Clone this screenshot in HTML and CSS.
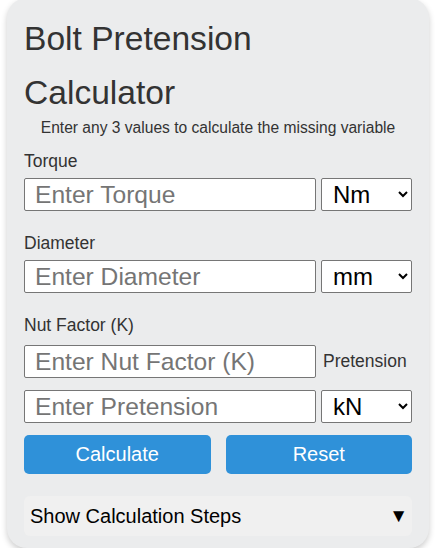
FILE: index.html
```html
<!DOCTYPE html>
<html lang="en">
<head>
    <meta charset="UTF-8">
    <meta name="viewport" content="width=device-width, initial-scale=1.0">
    <title>Bolt Pretension Calculator</title>
    <link rel="stylesheet" href="styles.css">
</head>
<body>
    <div class="calculator">
        <h1 class="title">Bolt Pretension Calculator</h1>
        <p class="subtitle">Enter any 3 values to calculate the missing variable</p>

        <div class="field">
            <label for="torque">Torque</label>
            <div class="row">
                <input type="number" id="torque" placeholder="Enter Torque">
                <select id="torqueUnit">
                    <option>Nm</option>
                    <option>lbf·ft</option>
                </select>
            </div>
        </div>

        <div class="field">
            <label for="diameter">Diameter</label>
            <div class="row">
                <input type="number" id="diameter" placeholder="Enter Diameter">
                <select id="diameterUnit">
                    <option>mm</option>
                    <option>in</option>
                </select>
            </div>
        </div>

        <div class="field">
            <label for="nutFactor" class="label-wide">Nut Factor (K)</label>
            <div class="row">
                <input type="number" id="nutFactor" placeholder="Enter Nut Factor (K)">
                <span class="inline-label">Pretension</span>
            </div>
            <div class="row row-next">
                <input type="number" id="pretension" placeholder="Enter Pretension">
                <select id="pretensionUnit">
                    <option>kN</option>
                    <option>lbf</option>
                </select>
            </div>
        </div>

        <div class="btn-group">
            <button class="btn" onclick="calculate()">Calculate</button>
            <button class="btn" onclick="resetForm()">Reset</button>
        </div>

        <details class="steps">
            <summary>Show Calculation Steps <span class="arrow">▼</span></summary>
            <div id="stepsText"></div>
        </details>
    </div>

    <script>
        // T = K * D * F
        function calculate() {
            const T = parseFloat(document.getElementById('torque').value);
            const D = parseFloat(document.getElementById('diameter').value) / 1000;
            const K = parseFloat(document.getElementById('nutFactor').value);
            const F = parseFloat(document.getElementById('pretension').value) * 1000;
            const steps = document.getElementById('stepsText');

            if (isNaN(F) && !isNaN(T) && !isNaN(D) && !isNaN(K)) {
                document.getElementById('pretension').value = (T / (K * D) / 1000).toFixed(2);
                steps.textContent = 'F = T / (K × D)';
            } else if (isNaN(T) && !isNaN(D) && !isNaN(K) && !isNaN(F)) {
                document.getElementById('torque').value = (K * D * F).toFixed(2);
                steps.textContent = 'T = K × D × F';
            } else if (isNaN(K) && !isNaN(T) && !isNaN(D) && !isNaN(F)) {
                document.getElementById('nutFactor').value = (T / (D * F)).toFixed(3);
                steps.textContent = 'K = T / (D × F)';
            } else if (isNaN(D) && !isNaN(T) && !isNaN(K) && !isNaN(F)) {
                document.getElementById('diameter').value = (T / (K * F) * 1000).toFixed(2);
                steps.textContent = 'D = T / (K × F)';
            } else {
                alert('Please enter exactly 3 values');
            }
        }

        function resetForm() {
            document.querySelectorAll('.calculator input').forEach(i => i.value = '');
            document.getElementById('stepsText').textContent = '';
        }
    </script>
</body>
</html>
```

FILE: styles.css
```css
* {
    box-sizing: border-box;
}

body {
    margin: 0;
    background: #fff;
    font-family: Arial, "Liberation Sans", sans-serif;
    color: #333;
}

.calculator {
    margin: -2px 7px 0;
    padding: 14px 17px 12px;
    background: #ebeced;
    border-radius: 20px;
    box-shadow: 0 3px 6px rgba(0,0,0,0.2);
}

/* header */
.title {
    max-width: 300px;
    margin: 0;
    font-size: 33.6px;
    font-weight: normal;
    line-height: 54px;
    color: #333;
}
.subtitle {
    margin: -2px 0 13px;
    font-size: 15.6px;
    line-height: 20px;
    text-align: center;
}

/* fields */
.field {
    margin-bottom: 22px;
}
.field label {
    display: block;
    font-size: 17.5px;
    line-height: 20px;
    margin-bottom: 7px;
}
.field .label-wide {
    margin-bottom: 10px;
}
.row {
    display: flex;
    align-items: center;
    gap: 5px;
}
.row-next {
    margin-top: 12px;
}
.row input {
    flex: 1;
    min-width: 0;
    height: 33px;
    padding: 0 10px;
    border: 1px solid #767676;
    border-radius: 2px;
    background: #fff;
    font-family: inherit;
    font-size: 24.6px;
    color: #000;
}
.row input::placeholder {
    color: #757575;
}
.row select {
    width: 91px;
    height: 33px;
    padding: 0 4px 0 7px;
    border: 1px solid #767676;
    border-radius: 2px;
    background: #fff;
    font-family: inherit;
    font-size: 24px;
    color: #000;
}
.inline-label {
    width: 91px;
    padding-left: 2px;
    font-size: 17.5px;
}

/* buttons */
.btn-group {
    display: grid;
    grid-template-columns: 1fr 1fr;
    gap: 15px;
    margin-top: -10px;
}
.btn {
    height: 39px;
    border: none;
    border-radius: 5px;
    background: #2f91d9;
    color: #fff;
    font-family: inherit;
    font-size: 20px;
    cursor: pointer;
}
.btn:hover {
    background: #2780c2;
}

/* calculation steps */
.steps {
    margin-top: 22px;
    background: #f0f0f0;
    border-radius: 6px;
}
.steps summary {
    display: flex;
    justify-content: space-between;
    align-items: center;
    height: 40px;
    padding: 0 4px 0 6px;
    list-style: none;
    font-size: 20px;
    color: #000;
    cursor: pointer;
}
.steps summary::-webkit-details-marker {
    display: none;
}
.arrow {
    font-size: 19px;
}
#stepsText {
    padding: 0 6px 10px;
    font-size: 16px;
}
```
